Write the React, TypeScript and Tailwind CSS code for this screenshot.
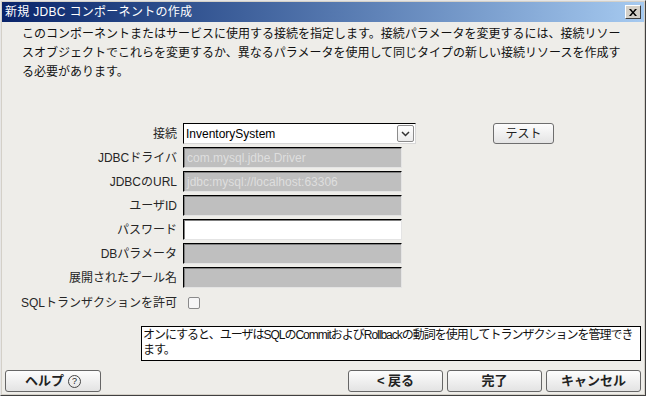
const jp = "font-['Liberation_Sans','Noto_Sans_CJK_JP',sans-serif]";

const Field = ({ value, white }: { value?: string; white?: boolean }) => (
  <div
    className={`h-[21px] w-[219px] border-t border-l border-black border-b border-r border-b-[#e4e4e4] border-r-[#e4e4e4] shadow-[inset_1px_1px_0_#808080] flex items-center pl-[3px] text-[12px] ${
      white ? "bg-white" : "bg-[#bfbfbf] text-[#dedede]"
    } font-['Liberation_Sans',sans-serif]`}
  >
    {value}
  </div>
);

const Label = ({ children }: { children: React.ReactNode }) => (
  <div className={`text-right text-[12px] text-[#262626] ${jp}`}>{children}</div>
);

const BarButton = ({ children, w }: { children: React.ReactNode; w: string }) => (
  <button
    className={`${w} h-[22px] rounded-[3px] border border-[#666] bg-linear-to-b from-[#fdfdfd] to-[#e3e3e3] flex items-center justify-center gap-[4px] text-[13px] font-bold text-[#222] ${jp}`}
  >
    {children}
  </button>
);

export default function App() {
  return (
    <div className="w-[646px] h-[396px] bg-[#d4d0c8] border-t border-l border-t-[#e6e6e6] border-l-[#e6e6e6] border-r border-b border-r-[#404040] border-b-[#404040] p-[1px] flex flex-col">
      {/* title bar */}
      <div className="h-[20px] bg-linear-to-r from-[#0a246a] to-[#a6caf0] flex items-center justify-between pl-[3px] pr-[3px]">
        <span className={`text-white text-[12px] tracking-[0.3px] ${jp}`}>
          新規 JDBC コンポーネントの作成
        </span>
        <button className="w-[16px] h-[14px] bg-[#d4d0c8] border border-t-white border-l-white border-r-[#404040] border-b-[#404040] flex items-center justify-center">
          <svg width="8" height="7" viewBox="0 0 8 7">
            <path d="M0 0 L2 0 L4 2.5 L6 0 L8 0 L5 3.5 L8 7 L6 7 L4 4.5 L2 7 L0 7 L3 3.5 Z" fill="#000" />
          </svg>
        </button>
      </div>

      {/* content */}
      <div className="flex-1 bg-[#eeede9] flex flex-col">
        <div className={`pl-[20px] pt-[3px] text-[12px] leading-[19px] text-[#111] whitespace-nowrap ${jp}`}>
          <div>このコンポーネントまたはサービスに使用する接続を指定します。接続パラメータを変更するには、接続リソー</div>
          <div>スオブジェクトでこれらを変更するか、異なるパラメータを使用して同じタイプの新しい接続リソースを作成す</div>
          <div>る必要があります。</div>
        </div>

        <div className="mt-[41px] grid grid-cols-[175px_auto] gap-x-[6px] gap-y-[3px] items-center">
          <Label>接続</Label>
          <div className="flex items-center">
            <div className="h-[21px] w-[233px] bg-white border-t border-l border-black border-b border-r border-b-[#d8d8d8] border-r-[#d8d8d8] flex items-center justify-between pl-[2px] pr-[1px]">
              <span className="text-[12px] font-['Liberation_Sans',sans-serif]">InventorySystem</span>
              <div className="w-[17px] h-[17px] rounded-[2px] border border-[#8c8c8c] bg-linear-to-b from-white to-[#ececec] flex items-center justify-center">
                <svg width="9" height="6" viewBox="0 0 9 6">
                  <path d="M1 1 L4.5 4.5 L8 1" stroke="#333" strokeWidth="1.5" fill="none" />
                </svg>
              </div>
            </div>
            <button className={`ml-[77px] w-[61px] h-[21px] rounded-[3px] border border-[#6e6e6e] bg-linear-to-b from-[#fdfdfd] to-[#e4e4e4] text-[12px] text-[#222] ${jp}`}>
              テスト
            </button>
          </div>

          <Label>JDBCドライバ</Label>
          <Field value="com.mysql.jdbe.Driver" />
          <Label>JDBCのURL</Label>
          <Field value="jdbc:mysql://localhost:63306" />
          <Label>ユーザID</Label>
          <Field />
          <Label>パスワード</Label>
          <Field white />
          <Label>DBパラメータ</Label>
          <Field />
          <Label>展開されたプール名</Label>
          <Field />

          <Label>SQLトランザクションを許可</Label>
          <div className="h-[24px] flex items-center">
            <div className="ml-[5px] w-[12px] h-[12px] rounded-[2px] border border-[#8a8a8a] bg-[#f6f6f6]" />
          </div>
        </div>

        <div className={`ml-[139px] mt-[11px] w-[500px] h-[35px] bg-white border border-black pl-[1px] pt-[1px] text-[12px] leading-[15px] text-[#111] whitespace-nowrap overflow-hidden tracking-[-1px] ${jp}`}>
          <div>オンにすると、ユーザはSQLのCommitおよびRollbackの動詞を使用してトランザクションを管理でき</div>
          <div>ます。</div>
        </div>

        <div className="mt-auto pb-[2px] pl-[3px] pr-[3px] flex items-center">
          <BarButton w="w-[96px]">
            ヘルプ
            <span className="w-[13px] h-[13px] rounded-full border border-[#444] flex items-center justify-center text-[9px] font-normal leading-none">
              ?
            </span>
          </BarButton>
          <div className="ml-auto flex gap-[4px]">
            <BarButton w="w-[95px]">&lt; 戻る</BarButton>
            <BarButton w="w-[95px]">完了</BarButton>
            <BarButton w="w-[95px]">キャンセル</BarButton>
          </div>
        </div>
      </div>
    </div>
  );
}
